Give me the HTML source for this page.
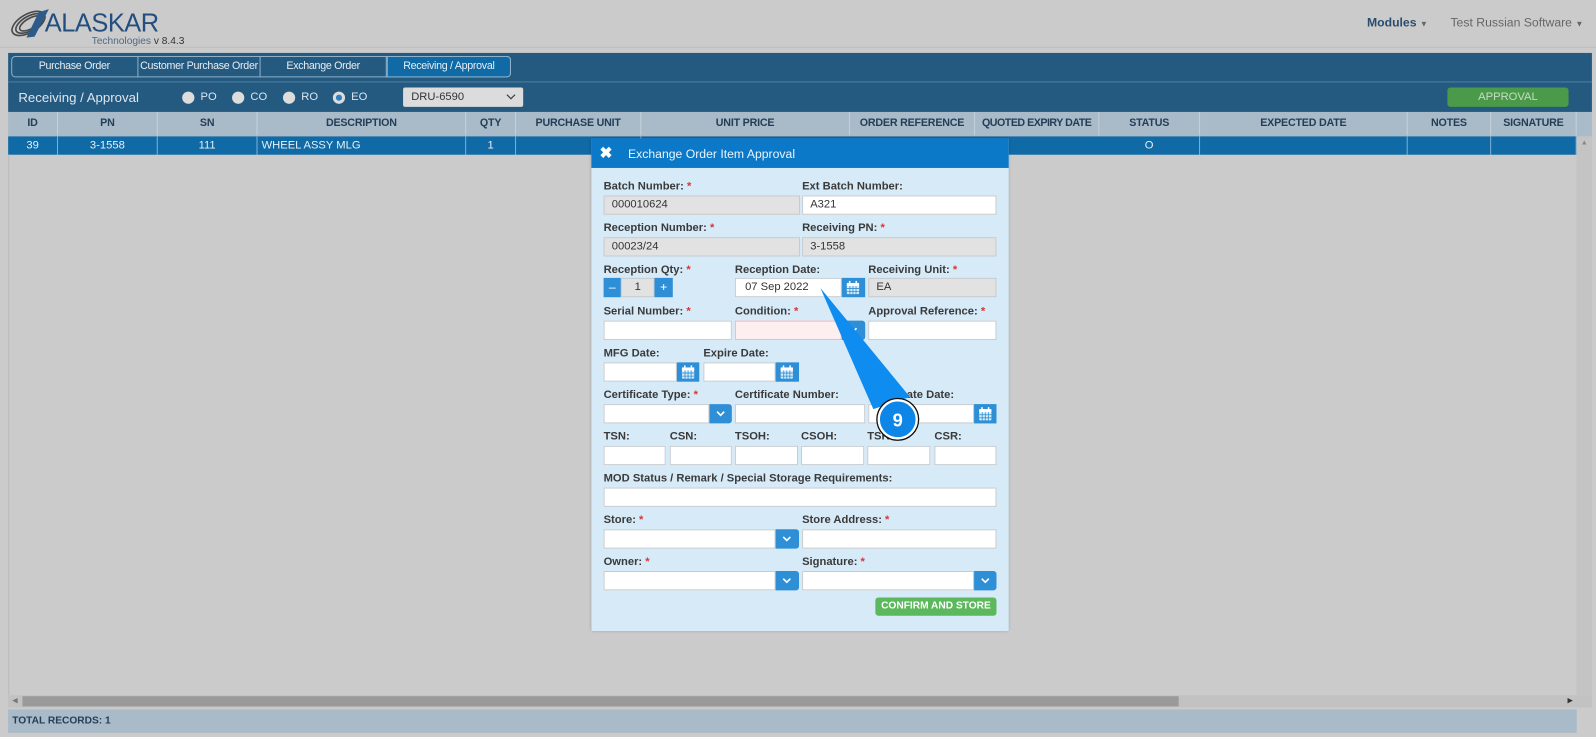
<!DOCTYPE html>
<html><head><meta charset="utf-8">
<style>
*{box-sizing:border-box;margin:0;padding:0}
html,body{width:1596px;height:737px;overflow:hidden;background:#cbcbcb;font-family:"Liberation Sans",Arial,sans-serif}
#w{position:absolute;left:0;top:0;width:1568px;height:724px;transform:scale(1.01786);transform-origin:0 0;background:#cbcbcb}
.a{position:absolute}
.t{position:absolute;white-space:nowrap}
.tab{position:absolute;top:55px;height:21px;color:#e6eef5;font-size:10.5px;letter-spacing:-0.3px;white-space:nowrap;text-align:center;line-height:20px;border-right:1px solid #8fb0c8}
.th{position:absolute;top:110px;height:23px;line-height:23px;font-size:10.5px;letter-spacing:-0.2px;white-space:nowrap;font-weight:bold;color:#233f58;text-align:center;border-right:1px solid #c5d1da}
.td{position:absolute;top:134px;height:18px;line-height:18px;font-size:11px;color:#e8f0f7;text-align:center;border-right:1px solid #7fb0d2}
.lb{position:absolute;font-size:11px;font-weight:bold;color:#3a3a3a;white-space:nowrap}
.lb i{color:#d33;font-style:normal}
.in{position:absolute;height:19px;background:#fff;border:1px solid #c8ccd0;font-size:11px;line-height:17px;padding-left:7px;color:#333}
.dis{background:#e2e2e2}
.bb{position:absolute;height:19px;background:#2f8fd6;border-radius:0 3px 3px 0}
.radio{position:absolute;top:90px;width:12px;height:12px;border-radius:50%;background:#ddd}
.rt{position:absolute;top:89px;font-size:11px;color:#dde6ee}
</style></head><body>
<div id="w">
<div class="a" style="left:0;top:0;width:1568px;height:47px;background:#cbcbcb;border-bottom:1px solid #bdbdbd"></div>
<svg class="a" style="left:8px;top:6px" width="50" height="34" viewBox="0 0 50 34">
<g fill="none" stroke="#4a4a4a" stroke-width="1.6">
<ellipse cx="20" cy="17" rx="18" ry="9" transform="rotate(-30 20 17)"/>
<ellipse cx="21" cy="17" rx="15" ry="7" transform="rotate(-30 21 17)"/>
<ellipse cx="22" cy="17" rx="12" ry="5" transform="rotate(-30 22 17)"/>
</g>
<path d="M30 6 L40 3 L26 30 L18 31 Z" fill="#2c5a8a"/>
</svg>
<div class="t" style="left:44px;top:9px;font-size:25px;color:#234f80;letter-spacing:-0.5px">ALASKAR</div>
<div class="t" style="left:90px;top:35px;font-size:10px;color:#4e6a86">Technologies <span style="color:#333">v 8.4.3</span></div>
<div class="t" style="left:1343px;top:15px;font-size:12px;font-weight:bold;color:#2a4c6e">Modules <span style="font-size:8px;color:#666">▼</span></div>
<div class="t" style="left:1425px;top:15px;font-size:12px;color:#666">Test Russian Software <span style="font-size:8px">▼</span></div>

<div class="a" style="left:8px;top:52px;width:1556px;height:58px;background:#245a80"></div>
<div class="a" style="left:8px;top:80px;width:1556px;height:1px;background:#4e7fa2"></div>
<div class="a" style="left:11px;top:55px;width:491px;height:21px;border:1px solid #8fb0c8;border-radius:4px"></div>
<div class="a" style="left:380px;top:55px;width:122px;height:21px;background:#0f6aa6;border:1px solid #8fb0c8;border-radius:0 4px 4px 0"></div>
<div class="tab" style="left:11px;width:125px">Purchase Order</div>
<div class="tab" style="left:136px;width:120px">Customer Purchase Order</div>
<div class="tab" style="left:256px;width:124px">Exchange Order</div>
<div class="tab" style="left:380px;width:122px;border:none">Receiving / Approval</div>
<div class="t" style="left:18px;top:88px;font-size:13px;color:#dde6ee">Receiving / Approval</div>
<div class="radio" style="left:179px"></div><div class="rt" style="left:197px">PO</div>
<div class="radio" style="left:228px"></div><div class="rt" style="left:246px">CO</div>
<div class="radio" style="left:278px"></div><div class="rt" style="left:296px">RO</div>
<div class="radio" style="left:327px;border:3px solid #ddd;background:#2f7fc0"></div><div class="rt" style="left:345px">EO</div>
<div class="a" style="left:396px;top:86px;width:118px;height:19px;background:#dcdcdc;border-radius:2px"></div>
<div class="t" style="left:404px;top:89px;font-size:11px;color:#333">DRU-6590</div>
<svg class="a" style="left:497px;top:91px" width="10" height="8"><path d="M1 2 L5 6 L9 2" fill="none" stroke="#444" stroke-width="1.2"/></svg>
<div class="a" style="left:1422px;top:86px;width:119px;height:19px;background:#4a9a4a;border-radius:3px;color:#c8dcc8;font-size:11px;text-align:center;line-height:19px">APPROVAL</div>

<div class="a" style="left:8px;top:110px;width:1556px;height:24px;background:#a9bac8"></div>
<div class="th" style="left:8px;width:49px">ID</div>
<div class="th" style="left:57px;width:98px">PN</div>
<div class="th" style="left:155px;width:98px">SN</div>
<div class="th" style="left:253px;width:205px">DESCRIPTION</div>
<div class="th" style="left:458px;width:49px">QTY</div>
<div class="th" style="left:507px;width:123px">PURCHASE UNIT</div>
<div class="th" style="left:630px;width:205px">UNIT PRICE</div>
<div class="th" style="left:835px;width:123px">ORDER REFERENCE</div>
<div class="th" style="left:958px;width:122px;letter-spacing:-0.5px">QUOTED EXPIRY DATE</div>
<div class="th" style="left:1080px;width:99px">STATUS</div>
<div class="th" style="left:1179px;width:204px">EXPECTED DATE</div>
<div class="th" style="left:1383px;width:82px">NOTES</div>
<div class="th" style="left:1465px;width:84px">SIGNATURE</div>
<div class="a" style="left:8px;top:134px;width:1541px;height:18px;background:#0f6aa6"></div>
<div class="td" style="left:8px;width:49px">39</div>
<div class="td" style="left:57px;width:98px">3-1558</div>
<div class="td" style="left:155px;width:98px">111</div>
<div class="td" style="left:253px;width:205px;text-align:left;padding-left:4px">WHEEL ASSY MLG</div>
<div class="td" style="left:458px;width:49px">1</div>
<div class="td" style="left:507px;width:123px"></div>
<div class="td" style="left:1080px;width:99px">O</div>
<div class="td" style="left:1179px;width:204px"></div>
<div class="td" style="left:1383px;width:82px"></div>
<div class="td" style="left:1465px;width:84px"></div>
<div class="a" style="left:8px;top:152px;width:1556px;height:531px;border-left:1px solid #bbb;border-right:1px solid #bbb"></div>
<div class="a" style="left:1549px;top:134px;width:15px;height:549px;background:#c4c4c4"></div>
<div class="t" style="left:1553px;top:137px;font-size:7px;color:#888">▲</div>
<div class="a" style="left:8px;top:683px;width:1556px;height:12px;background:#c2c2c2"></div>
<div class="a" style="left:22px;top:684px;width:1136px;height:10px;background:#9a9a9a"></div>
<div class="t" style="left:12px;top:684px;font-size:7px;color:#777">◀</div>
<div class="t" style="left:1540px;top:684px;font-size:7px;color:#333">▶</div>
<div class="a" style="left:8px;top:697px;width:1541px;height:23px;background:#a9bac8"></div>
<div class="t" style="left:12px;top:703px;font-size:10px;font-weight:bold;color:#233f58">TOTAL RECORDS: 1</div>

<div class="a" style="left:581px;top:136px;width:410px;height:484px;background:#d6eaf8;box-shadow:0 0 3px rgba(0,0,0,.3)"></div>
<div class="a" style="left:581px;top:136px;width:410px;height:29px;background:#0b78c8"></div>
<div class="t" style="left:589px;top:141px;font-size:15px;font-weight:bold;color:#fff">✖</div>
<div class="t" style="left:617px;top:144px;font-size:12px;color:#eaf4fc">Exchange Order Item Approval</div>

<div class="lb" style="left:593px;top:177px">Batch Number: <i>*</i></div>
<div class="lb" style="left:788px;top:177px">Ext Batch Number:</div>
<div class="in dis" style="left:593px;top:192px;width:193px">000010624</div>
<div class="in" style="left:788px;top:192px;width:191px">A321</div>

<div class="lb" style="left:593px;top:218px">Reception Number: <i>*</i></div>
<div class="lb" style="left:788px;top:218px">Receiving PN: <i>*</i></div>
<div class="in dis" style="left:593px;top:233px;width:193px">00023/24</div>
<div class="in dis" style="left:788px;top:233px;width:191px">3-1558</div>

<div class="lb" style="left:593px;top:259px">Reception Qty: <i>*</i></div>
<div class="lb" style="left:722px;top:259px">Reception Date:</div>
<div class="lb" style="left:853px;top:259px">Receiving Unit: <i>*</i></div>
<div class="a" style="left:593px;top:273px;width:17px;height:19px;background:#2f8fd6;color:#fff;text-align:center;font-size:12px;line-height:18px">–</div>
<div class="in dis" style="left:610px;top:273px;width:33px;text-align:center;padding:0">1</div>
<div class="a" style="left:643px;top:273px;width:18px;height:19px;background:#2f8fd6;color:#fff;text-align:center;font-size:12px;line-height:18px">+</div>
<div class="in" style="left:722px;top:273px;width:105px;padding-left:9px">07 Sep 2022</div>
<div class="bb" style="left:827px;top:273px;width:23px;border-radius:0"></div>
<div class="in dis" style="left:853px;top:273px;width:126px">EA</div>

<div class="lb" style="left:593px;top:300px">Serial Number: <i>*</i></div>
<div class="lb" style="left:722px;top:300px">Condition: <i>*</i></div>
<div class="lb" style="left:853px;top:300px">Approval Reference: <i>*</i></div>
<div class="in" style="left:593px;top:315px;width:126px"></div>
<div class="in" style="left:722px;top:315px;width:105px;background:#fdeef0;border-color:#f2b8c0"></div>
<div class="bb" style="left:827px;top:315px;width:23px"></div>
<div class="in" style="left:853px;top:315px;width:126px"></div>

<div class="lb" style="left:593px;top:341px">MFG Date:</div>
<div class="lb" style="left:691px;top:341px">Expire Date:</div>
<div class="in" style="left:593px;top:356px;width:72px"></div>
<div class="bb" style="left:665px;top:356px;width:22px;border-radius:0"></div>
<div class="in" style="left:691px;top:356px;width:71px"></div>
<div class="bb" style="left:762px;top:356px;width:23px;border-radius:0"></div>

<div class="lb" style="left:593px;top:382px">Certificate Type: <i>*</i></div>
<div class="lb" style="left:722px;top:382px">Certificate Number:</div>
<div class="lb" style="left:853px;top:382px">Certificate Date:</div>
<div class="in" style="left:593px;top:397px;width:104px"></div>
<div class="bb" style="left:697px;top:397px;width:22px"></div>
<div class="in" style="left:722px;top:397px;width:128px"></div>
<div class="in" style="left:853px;top:397px;width:104px"></div>
<div class="bb" style="left:957px;top:397px;width:22px;border-radius:0"></div>

<div class="lb" style="left:593px;top:423px">TSN:</div>
<div class="lb" style="left:658px;top:423px">CSN:</div>
<div class="lb" style="left:722px;top:423px">TSOH:</div>
<div class="lb" style="left:787px;top:423px">CSOH:</div>
<div class="lb" style="left:852px;top:423px">TSR:</div>
<div class="lb" style="left:918px;top:423px">CSR:</div>
<div class="in" style="left:593px;top:438px;width:61px"></div>
<div class="in" style="left:658px;top:438px;width:61px"></div>
<div class="in" style="left:722px;top:438px;width:62px"></div>
<div class="in" style="left:787px;top:438px;width:62px"></div>
<div class="in" style="left:852px;top:438px;width:62px"></div>
<div class="in" style="left:918px;top:438px;width:61px"></div>

<div class="lb" style="left:593px;top:464px">MOD Status / Remark / Special Storage Requirements:</div>
<div class="in" style="left:593px;top:479px;width:386px"></div>

<div class="lb" style="left:593px;top:505px">Store: <i>*</i></div>
<div class="lb" style="left:788px;top:505px">Store Address: <i>*</i></div>
<div class="in" style="left:593px;top:520px;width:169px"></div>
<div class="bb" style="left:762px;top:520px;width:23px"></div>
<div class="in" style="left:788px;top:520px;width:191px"></div>

<div class="lb" style="left:593px;top:546px">Owner: <i>*</i></div>
<div class="lb" style="left:788px;top:546px">Signature: <i>*</i></div>
<div class="in" style="left:593px;top:561px;width:169px"></div>
<div class="bb" style="left:762px;top:561px;width:23px"></div>
<div class="in" style="left:788px;top:561px;width:169px"></div>
<div class="bb" style="left:957px;top:561px;width:22px"></div>

<div class="a" style="left:860px;top:587px;width:119px;height:18px;background:#5cb85c;border-radius:3px;color:#fff;font-size:10px;font-weight:bold;text-align:center;line-height:18px">CONFIRM AND STORE</div>

<svg class="a" style="left:0;top:0" width="1568" height="724" viewBox="0 0 1568 724">
<defs>
<g id="cal"><rect x="-6" y="-5" width="12" height="11" fill="#d8ecfa" rx="1"/><rect x="-6" y="-5" width="12" height="3" fill="#fff"/>
<rect x="-4" y="-7" width="1.5" height="3" fill="#fff"/><rect x="2.5" y="-7" width="1.5" height="3" fill="#fff"/>
<path d="M-6 0.5H6M-6 3.5H6M-3 -2V6M0 -2V6M3 -2V6" stroke="#2f8fd6" stroke-width="0.8"/></g>
<path id="chv" d="M-3.5 -1.5 L0 2 L3.5 -1.5" fill="none" stroke="#fff" stroke-width="1.6"/>
</defs>
<use href="#cal" x="838" y="283"/>
<use href="#cal" x="676" y="366"/>
<use href="#cal" x="773" y="366"/>
<use href="#cal" x="968" y="407"/>
<use href="#chv" x="838" y="324"/>
<use href="#chv" x="708" y="406"/>
<use href="#chv" x="773" y="529"/>
<use href="#chv" x="773" y="570"/>
<use href="#chv" x="968" y="570"/>
<polygon points="806,283 858,402 894,390" fill="#0e8cf0"/>
<circle cx="882" cy="412" r="19" fill="#0e86e8" stroke="#fff" stroke-width="3"/>
<circle cx="882" cy="412" r="20.5" fill="none" stroke="#111" stroke-width="1.3"/>
<text x="882" y="419" text-anchor="middle" font-family="Liberation Sans, sans-serif" font-weight="bold" font-size="18" fill="#fff">9</text>
</svg>
</div>
</body></html>
